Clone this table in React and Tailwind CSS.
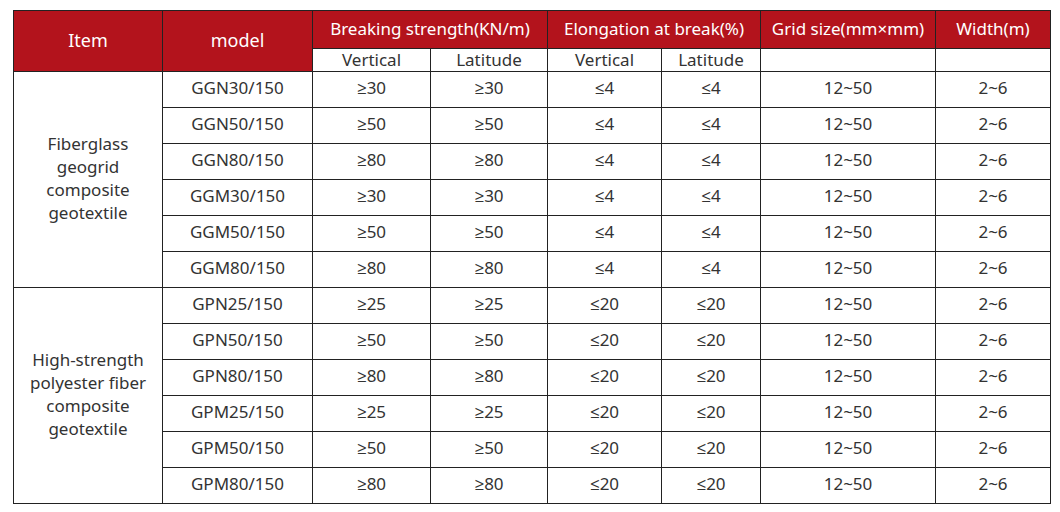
import React from "react";

const groups = [
  {
    name: ["Fiberglass", "geogrid", "composite", "geotextile"],
    rows: [
      ["GGN30/150", "≥30", "≥30", "≤4", "≤4"],
      ["GGN50/150", "≥50", "≥50", "≤4", "≤4"],
      ["GGN80/150", "≥80", "≥80", "≤4", "≤4"],
      ["GGM30/150", "≥30", "≥30", "≤4", "≤4"],
      ["GGM50/150", "≥50", "≥50", "≤4", "≤4"],
      ["GGM80/150", "≥80", "≥80", "≤4", "≤4"],
    ],
  },
  {
    name: ["High-strength", "polyester fiber", "composite", "geotextile"],
    rows: [
      ["GPN25/150", "≥25", "≥25", "≤20", "≤20"],
      ["GPN50/150", "≥50", "≥50", "≤20", "≤20"],
      ["GPN80/150", "≥80", "≥80", "≤20", "≤20"],
      ["GPM25/150", "≥25", "≥25", "≤20", "≤20"],
      ["GPM50/150", "≥50", "≥50", "≤20", "≤20"],
      ["GPM80/150", "≥80", "≥80", "≤20", "≤20"],
    ],
  },
];

const td = "border-[1.5px] border-[#222] text-center align-middle p-0";
const tdd = "border-[1.5px] border-[#222] text-center align-middle p-0 pb-[3px]";

export default function App() {
  return (
    <div
      className="w-[1060px] h-[512px] bg-white pt-[10px] pl-[13px]"
      style={{ fontFamily: '"Noto Sans", "Open Sans", sans-serif' }}
    >
      <table className="border-collapse table-fixed w-[1037px] text-[#333] text-[17px] leading-[20px]">
        <colgroup>
          <col className="w-[149px]" />
          <col className="w-[150px]" />
          <col className="w-[118px]" />
          <col className="w-[117px]" />
          <col className="w-[114px]" />
          <col className="w-[99px]" />
          <col className="w-[175px]" />
          <col className="w-[115px]" />
        </colgroup>
        <thead>
          <tr className="h-[38px] bg-[#b3131c] text-white text-[17px]">
            <th rowSpan={2} className={`${td} font-normal text-[18px] pb-[3px]`}>Item</th>
            <th rowSpan={2} className={`${td} font-normal text-[18px] pb-[3px]`}>model</th>
            <th colSpan={2} className={`${td} font-normal pb-[2px]`}>Breaking strength(KN/m)</th>
            <th colSpan={2} className={`${td} font-normal pb-[2px]`}>Elongation at break(%)</th>
            <th className={`${td} font-normal pb-[2px]`}>Grid size(mm×mm)</th>
            <th className={`${td} font-normal pb-[2px]`}>Width(m)</th>
          </tr>
          <tr className="h-[23px] bg-white text-[#333] text-[17px]">
            <th className={`${td} font-normal`}>Vertical</th>
            <th className={`${td} font-normal`}>Latitude</th>
            <th className={`${td} font-normal`}>Vertical</th>
            <th className={`${td} font-normal`}>Latitude</th>
            <th className={`${td} font-normal`}></th>
            <th className={`${td} font-normal`}></th>
          </tr>
        </thead>
        <tbody>
          {groups.map((g) =>
            g.rows.map((r, i) => (
              <tr key={r[0]} className="h-[36px]">
                {i === 0 && (
                  <td rowSpan={6} className={`${tdd} leading-[23px]`}>
                    {g.name.map((l) => (
                      <div key={l}>{l}</div>
                    ))}
                  </td>
                )}
                {r.map((c, j) => (
                  <td key={j} className={tdd}>{c}</td>
                ))}
                <td className={tdd}>12~50</td>
                <td className={tdd}>2~6</td>
              </tr>
            ))
          )}
        </tbody>
      </table>
    </div>
  );
}
